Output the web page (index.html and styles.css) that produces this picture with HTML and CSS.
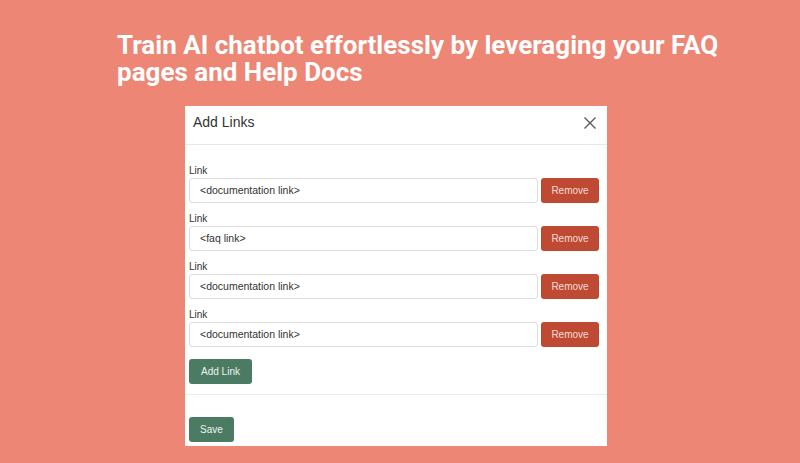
FILE: index.html
```html
<!DOCTYPE html>
<html>
<head>
<meta charset="utf-8">
<link rel="stylesheet" href="styles.css">
</head>
<body>
<div class="page">
  <h1 class="headline">Train AI chatbot effortlessly by leveraging your FAQ<br>pages and Help Docs</h1>
  <div class="modal">
    <div class="modal-header">
      <span class="modal-title">Add Links</span>
      <svg class="close" width="12" height="12" viewBox="0 0 12 12"><path d="M0.5 0.5 L11.5 11.5 M11.5 0.5 L0.5 11.5" stroke="#555" stroke-width="1.3" fill="none"/></svg>
    </div>
    <div class="modal-body">
      <div class="field">
        <label class="label">Link</label>
        <div class="row"><div class="input">&lt;documentation link&gt;</div><button class="btn btn-remove">Remove</button></div>
      </div>
      <div class="field">
        <label class="label">Link</label>
        <div class="row"><div class="input">&lt;faq link&gt;</div><button class="btn btn-remove">Remove</button></div>
      </div>
      <div class="field">
        <label class="label">Link</label>
        <div class="row"><div class="input">&lt;documentation link&gt;</div><button class="btn btn-remove">Remove</button></div>
      </div>
      <div class="field">
        <label class="label">Link</label>
        <div class="row"><div class="input">&lt;documentation link&gt;</div><button class="btn btn-remove">Remove</button></div>
      </div>
      <button class="btn btn-green btn-add">Add Link</button>
    </div>
    <div class="modal-footer">
      <button class="btn btn-green btn-save">Save</button>
    </div>
  </div>
</div>
</body>
</html>
```
FILE: styles.css
```css
html, body {
  margin: 0;
  padding: 0;
}
body {
  background: #ed8674;
  width: 800px;
  height: 463px;
  overflow: hidden;
}
.page {
  padding-top: 32px;
}
.headline {
  margin: 0 0 20px 117px;
  font-family: Roboto, "Liberation Sans", sans-serif;
  font-weight: 700;
  font-size: 26px;
  line-height: 27px;
  color: #ffffff;
}
.modal {
  margin-left: 185px;
  width: 422px;
  height: 340px;
  background: #ffffff;
  font-family: "Liberation Sans", Arial, sans-serif;
  color: #333;
  display: flex;
  flex-direction: column;
}
.modal-header {
  height: 38px;
  border-bottom: 1px solid #e8e8e8;
  display: flex;
  align-items: center;
  justify-content: space-between;
  padding: 0 11px 0 8px;
}
.modal-title {
  font-size: 14px;
  color: #333;
  margin-top: -6px;
}
.close {
  display: block;
  margin-top: -4px;
}
.modal-body {
  padding: 19px 8px 10px 4px;
  border-bottom: 1px solid #ececec;
}
.field {
  margin-bottom: 9px;
}
.field:nth-of-type(4) {
  margin-bottom: 12px;
}
.label {
  display: block;
  font-size: 10px;
  line-height: 14px;
  color: #333;
}
.row {
  display: flex;
  gap: 3px;
}
.input {
  flex: 1;
  height: 25px;
  box-sizing: border-box;
  border: 1px solid #dcdcdc;
  border-radius: 3px;
  padding: 0 10px;
  font-size: 10.5px;
  line-height: 23px;
  color: #333;
}
.btn {
  border: none;
  border-radius: 3px;
  height: 25px;
  font-family: "Liberation Sans", Arial, sans-serif;
  font-size: 10px;
  padding: 0;
  cursor: pointer;
}
.btn-remove {
  width: 58px;
  background: #bf4a33;
  color: #f6ddd6;
}
.btn-green {
  background: #4b7c63;
  color: #eef3ef;
  display: block;
}
.btn-add {
  width: 63px;
}
.modal-footer {
  padding: 22px 0 0 4px;
}
.btn-save {
  width: 45px;
}
```
